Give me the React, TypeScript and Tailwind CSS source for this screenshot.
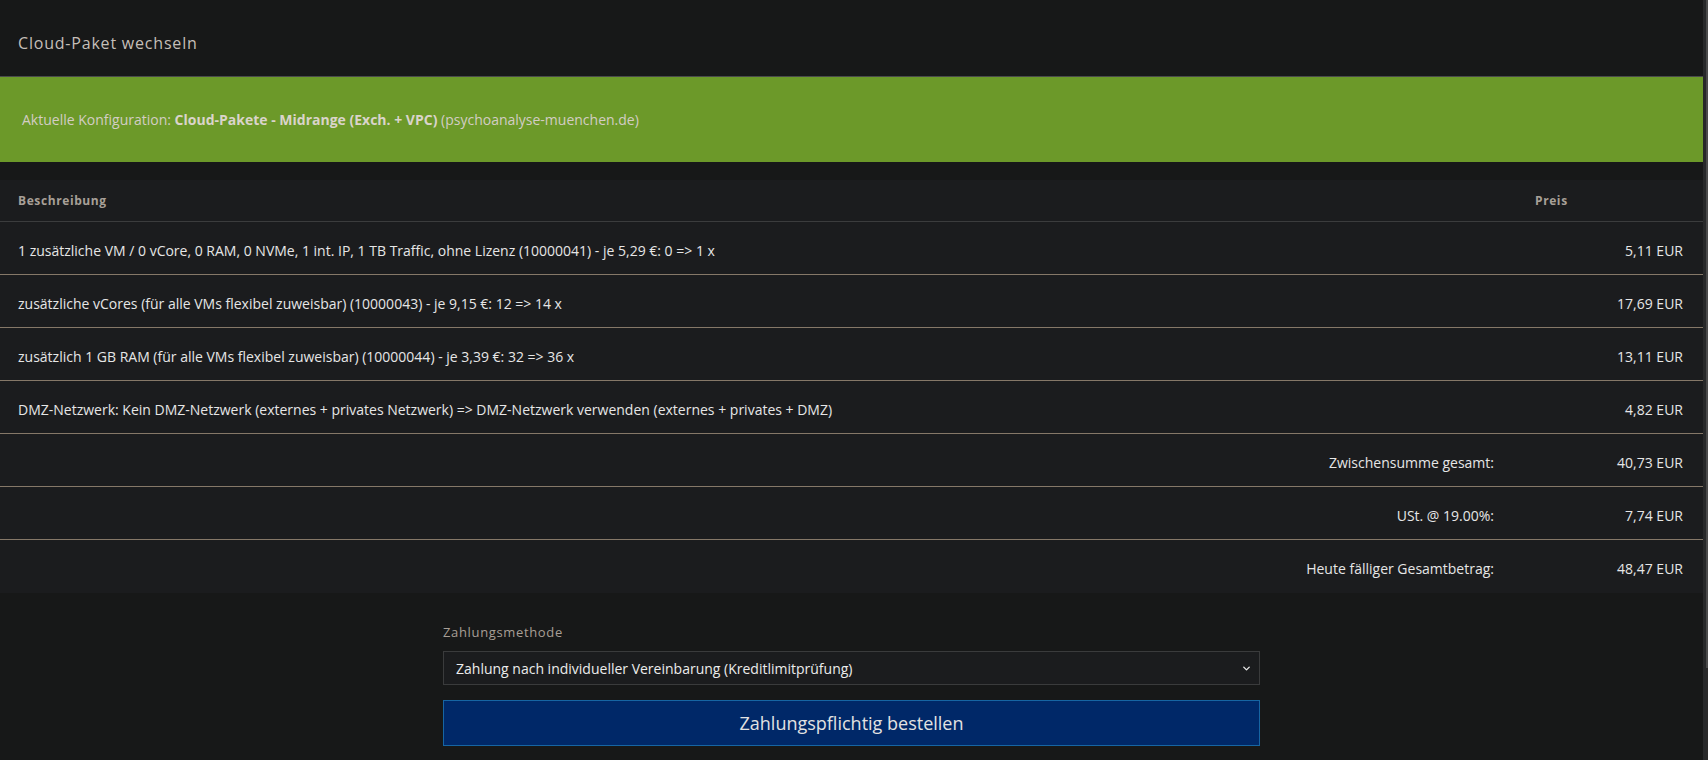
import { ChevronDown } from "lucide-react";

const items = [
  {
    text: "1 zusätzliche VM / 0 vCore, 0 RAM, 0 NVMe, 1 int. IP, 1 TB Traffic, ohne Lizenz (10000041) - je 5,29 €: 0 => 1 x",
    price: "5,11 EUR",
  },
  {
    text: "zusätzliche vCores (für alle VMs flexibel zuweisbar) (10000043) - je 9,15 €: 12 => 14 x",
    price: "17,69 EUR",
  },
  {
    text: "zusätzlich 1 GB RAM (für alle VMs flexibel zuweisbar) (10000044) - je 3,39 €: 32 => 36 x",
    price: "13,11 EUR",
  },
  {
    text: "DMZ-Netzwerk: Kein DMZ-Netzwerk (externes + privates Netzwerk) => DMZ-Netzwerk verwenden (externes + privates + DMZ)",
    price: "4,82 EUR",
  },
];

const totals = [
  { label: "Zwischensumme gesamt:", price: "40,73 EUR" },
  { label: "USt. @ 19.00%:", price: "7,74 EUR" },
  { label: "Heute fälliger Gesamtbetrag:", price: "48,47 EUR" },
];

export default function App() {
  return (
    <div className="flex h-[760px] w-full overflow-hidden bg-[#171818] font-['Open_Sans',sans-serif]">
      <main className="flex-1 min-w-0">
        <header className="h-[76px] pl-[18px] pt-[31px]">
          <h1 className="text-[16px] leading-6 text-[#c5bfb8] tracking-[0.05em]">Cloud-Paket wechseln</h1>
        </header>

        <div className="flex h-[86px] items-center border-t border-[#4a4b4b] bg-[#6c9929] pl-[22px] text-[14px] text-[#d3cdc4]">
          <p>
            Aktuelle Konfiguration: <b className="font-bold text-[#dad4cb]">Cloud-Pakete - Midrange (Exch. + VPC)</b>{" "}
            (psychoanalyse-muenchen.de)
          </p>
        </div>

        <div className="h-[18px]" />

        <section className="bg-[#1b1c1e] text-[14px] text-[#e6e6e6]">
          <div className="grid h-[42px] grid-cols-[1fr_168px] items-center border-b border-[#3b3c3d] text-[12px] font-bold tracking-[0.05em] text-[#a8a098]">
            <div className="pl-[18px]">Beschreibung</div>
            <div>Preis</div>
          </div>
          {items.map((item) => (
            <div
              key={item.price}
              className="grid h-[53px] grid-cols-[1fr_168px] items-center border-b border-[#857868] pt-[4px]"
            >
              <div className="pl-[18px]">{item.text}</div>
              <div className="pr-[20px] text-right">{item.price}</div>
            </div>
          ))}
          {totals.map((row, i) => (
            <div
              key={row.label}
              className={
                i < totals.length - 1
                  ? "grid h-[53px] grid-cols-[1fr_168px] items-center border-b border-[#857868] pt-[4px]"
                  : "grid h-[53px] grid-cols-[1fr_168px] items-center pt-[4px]"
              }
            >
              <div className="pr-[41px] text-right">{row.label}</div>
              <div className="pr-[20px] text-right">{row.price}</div>
            </div>
          ))}
        </section>

        <div className="mx-auto w-[817px] pt-[30px]">
          <label className="block text-[13px] leading-[18px] text-[#a89f96] tracking-[0.05em]">Zahlungsmethode</label>
          <div className="mt-[10px] flex h-[34px] items-center justify-between border border-[#3a3b3c] bg-[#1b1c1e] pl-[12px] pr-[7px] text-[14px] text-[#ececec]">
            <span>Zahlung nach individueller Vereinbarung (Kreditlimitprüfung)</span>
            <ChevronDown className="h-[11px] w-[11px] text-[#e8e8e8]" strokeWidth={3} />
          </div>
          <button className="mt-[15px] flex h-[46px] w-full items-center justify-center border border-[#1665a3] bg-[#002868] text-[18px] text-[#e2e2e2]">
            Zahlungspflichtig bestellen
          </button>
        </div>
      </main>

      <aside className="flex w-[5px] shrink-0 bg-[#28292a]">
        <div className="w-[3px]" />
        <div className="flex w-[2px] flex-col">
          <div className="h-[668px] bg-[#4b4b4b]" />
          <div className="flex-1 bg-[#2a2a2a]" />
        </div>
      </aside>
    </div>
  );
}
